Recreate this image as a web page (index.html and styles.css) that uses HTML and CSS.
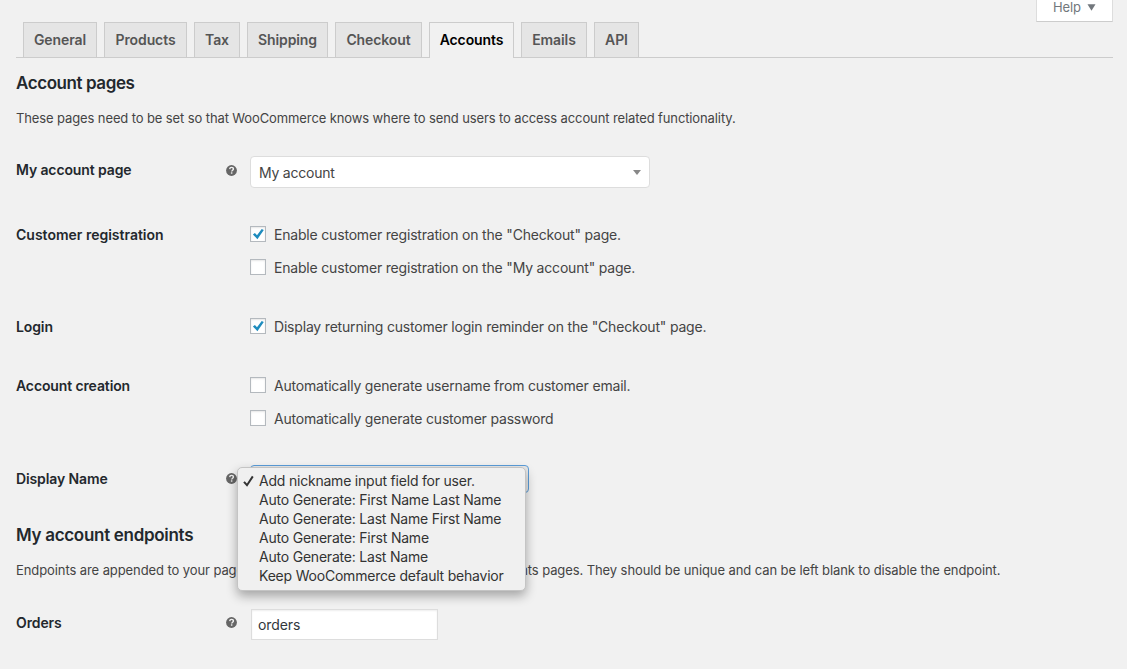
FILE: index.html
```html
<!DOCTYPE html>
<html lang="en">
<head>
<meta charset="utf-8">
<title>WooCommerce settings – Accounts</title>
<link rel="stylesheet" href="styles.css">
</head>
<body>
<svg class="defs" width="0" height="0" aria-hidden="true">
  <symbol id="help" viewBox="0 0 11 11">
    <circle cx="5.5" cy="5.5" r="5.4" fill="#666"/>
    <path d="M3.7 4.1C3.8 2.9 4.6 2.4 5.5 2.4c1.1 0 1.9.6 1.9 1.6 0 1.2-1.7 1.2-1.7 2.5" fill="none" stroke="#f1f1f1" stroke-width="1.4"/>
    <rect x="4.9" y="7.3" width="1.5" height="1.4" fill="#f1f1f1"/>
  </symbol>
  <symbol id="tick" viewBox="0 0 12 12">
    <path d="M.9 6.4 2.9 4.9 5 7.3 9.7.9 11.8 2 5.4 11.2Z" fill="#1e8cbe"/>
  </symbol>
</svg>
<div class="page">
  <header class="top"><button class="help-tab"><span>Help</span><svg width="9" height="7" viewBox="0 0 9 7"><path d="M.5.3h8L4.5 6.7Z" fill="#72777c"/></svg></button></header>
  <nav class="tabs">
    <a class="tab w-general"><span>General</span></a>
    <a class="tab w-products"><span>Products</span></a>
    <a class="tab w-tax"><span>Tax</span></a>
    <a class="tab w-shipping"><span>Shipping</span></a>
    <a class="tab w-checkout"><span>Checkout</span></a>
    <a class="tab w-accounts active"><span>Accounts</span></a>
    <a class="tab w-emails"><span>Emails</span></a>
    <a class="tab w-api"><span>API</span></a>
  </nav>
  <h2 class="heading heading-pages">Account pages</h2>
  <p class="intro">These pages need to be set so that WooCommerce knows where to send users to access account related functionality.</p>
  <div class="form">
    <div class="row row-page">
      <label class="label">My account page</label>
      <svg class="tip"><use href="#help"/></svg>
      <div class="select2"><span>My account</span><svg width="8" height="5" viewBox="0 0 8 5"><path d="M0 0h8L4 5Z" fill="#888"/></svg></div>
    </div>
    <div class="row row-double">
      <label class="label label-wide">Customer registration</label>
      <div class="checks">
        <label class="check"><span class="box"><svg width="12" height="12"><use href="#tick"/></svg></span><span>Enable customer registration on the "Checkout" page.</span></label>
        <label class="check"><span class="box"></span><span>Enable customer registration on the "My account" page.</span></label>
      </div>
    </div>
    <div class="row row-single">
      <label class="label">Login</label>
      <div class="checks">
        <label class="check"><span class="box"><svg width="12" height="12"><use href="#tick"/></svg></span><span>Display returning customer login reminder on the "Checkout" page.</span></label>
      </div>
    </div>
    <div class="row row-creation">
      <label class="label">Account creation</label>
      <div class="checks">
        <label class="check"><span class="box"></span><span>Automatically generate username from customer email.</span></label>
        <label class="check"><span class="box"></span><span>Automatically generate customer password</span></label>
      </div>
    </div>
    <div class="row row-name">
      <label class="label">Display Name</label>
      <svg class="tip"><use href="#help"/></svg>
      <div class="select">
        <ul class="menu">
          <li><svg class="mark" width="11" height="12" viewBox="0 0 11 12"><path d="M1 6.8 4 10.2 9.8 1.4" fill="none" stroke="#333" stroke-width="2"/></svg>Add nickname input field for user.</li>
          <li>Auto Generate: First Name Last Name</li>
          <li>Auto Generate: Last Name First Name</li>
          <li>Auto Generate: First Name</li>
          <li>Auto Generate: Last Name</li>
          <li>Keep WooCommerce default behavior</li>
        </ul>
      </div>
    </div>
  </div>
  <h2 class="heading">My account endpoints</h2>
  <p class="intro endpoints">Endpoints are appended to your page URLs to handle specific actions on the accounts pages. They should be unique and can be left blank to disable the endpoint.</p>
  <div class="form form-endpoints">
    <div class="row">
      <label class="label">Orders</label>
      <svg class="tip tip-orders"><use href="#help"/></svg>
      <input class="text" type="text" value="orders">
    </div>
  </div>
</div>
</body>
</html>
```
FILE: styles.css
```css
* { box-sizing: border-box; }
body { margin: 0; height: 669px; overflow: hidden; background: #f1f1f1; color: #444; font: 14px/20px Inter, "Liberation Sans", sans-serif; }
.defs { position: absolute; }
.page { padding: 0 14px 0 16px; }
.top { display: flex; justify-content: flex-end; height: 22px; }
.help-tab { display: flex; align-items: center; gap: 6px; width: 77px; height: 22px; padding: 0 0 7px 16px; border: 1px solid #ddd; border-top: 0; border-bottom-color: #ccc; background: #fff; color: #72777c; font: 13px/14px Inter, sans-serif; letter-spacing: -.1px; white-space: nowrap; }
.tabs { display: flex; gap: 7px; height: 36px; padding-left: 7px; border-bottom: 1px solid #ccc; }
.tab { display: flex; justify-content: center; height: 35px; padding-top: 7px; border: 1px solid #ccc; border-bottom: 0; background: #e5e5e5; color: #555; font-weight: 600; letter-spacing: -.1px; white-space: nowrap; }
.tab.active { height: 36px; background: #f1f1f1; color: #000; }
.w-general { width: 74px; }
.w-products { width: 83px; }
.w-tax { width: 46px; }
.w-shipping { width: 81px; }
.w-checkout { width: 87px; }
.w-accounts { width: 85px; }
.w-emails { width: 66px; }
.w-api { width: 45px; }
.heading { margin: 15px 0; color: #23282d; font-size: 17px; line-height: 20px; font-weight: 600; letter-spacing: -.3px; }
.heading-pages { letter-spacing: -.42px; }
.intro { margin: 0; font-size: 13px; line-height: 20px; letter-spacing: -.112px; white-space: nowrap; }
.endpoints { letter-spacing: -.09px; }
.form { margin-top: 17px; }
.form-endpoints { margin-top: 18px; }
.row { display: grid; grid-template-columns: 210px 24px 1fr; padding-top: 15px; align-items: start; }
.row-page { height: 65px; }
.row-double { height: 92px; }
.row-single { height: 59px; }
.row-creation { height: 93px; }
.row-name { height: 56px; }
.label { color: #23282d; font-weight: 600; letter-spacing: -.12px; white-space: nowrap; }
.label-wide { letter-spacing: 0; }
.tip { width: 11px; height: 11px; margin-top: 5px; }
.row-name .tip, .tip-orders { margin-top: 4px; }
.select2 { display: flex; align-items: center; justify-content: space-between; width: 400px; height: 32px; margin-top: -4px; padding: 2px 8px 0; border: 1px solid #ddd; border-radius: 4px; background: #fff; letter-spacing: -.22px; }
.select2 svg { margin-top: -2px; }
.checks { grid-column: 3; display: grid; gap: 13px; }
.check { display: flex; gap: 8px; height: 20px; letter-spacing: -.19px; white-space: nowrap; }
.box { width: 16px; height: 16px; margin-top: 1px; padding: 1px; border: 1px solid #b4b9be; background: #fff; box-shadow: inset 0 1px 2px rgba(0,0,0,.1); }
.box svg { display: block; }
.select { position: relative; width: 279px; height: 28px; margin-top: -4px; border: 1px solid #5b9dd9; border-radius: 4px; background: #e8e8e8; }
.menu { position: absolute; left: -14px; top: 1px; z-index: 1; width: 289px; height: 124px; margin: 0; padding: 3px 0 0 21px; border: 1px solid #c4c4c4; border-radius: 5px; background: #f0f0f0; color: #333; box-shadow: 0 5px 11px rgba(0,0,0,.32); list-style: none; line-height: 19px; letter-spacing: -.21px; white-space: nowrap; }
.menu li { position: relative; }
.mark { position: absolute; left: -16px; top: 4px; }
.text { width: 187px; height: 31px; margin: -4px 0 0 1px; padding: 0 6px; border: 1px solid #ddd; background: #fff; color: #32373c; font: 14px Inter, sans-serif; letter-spacing: -.1px; box-shadow: inset 0 1px 2px rgba(0,0,0,.07); }
```
